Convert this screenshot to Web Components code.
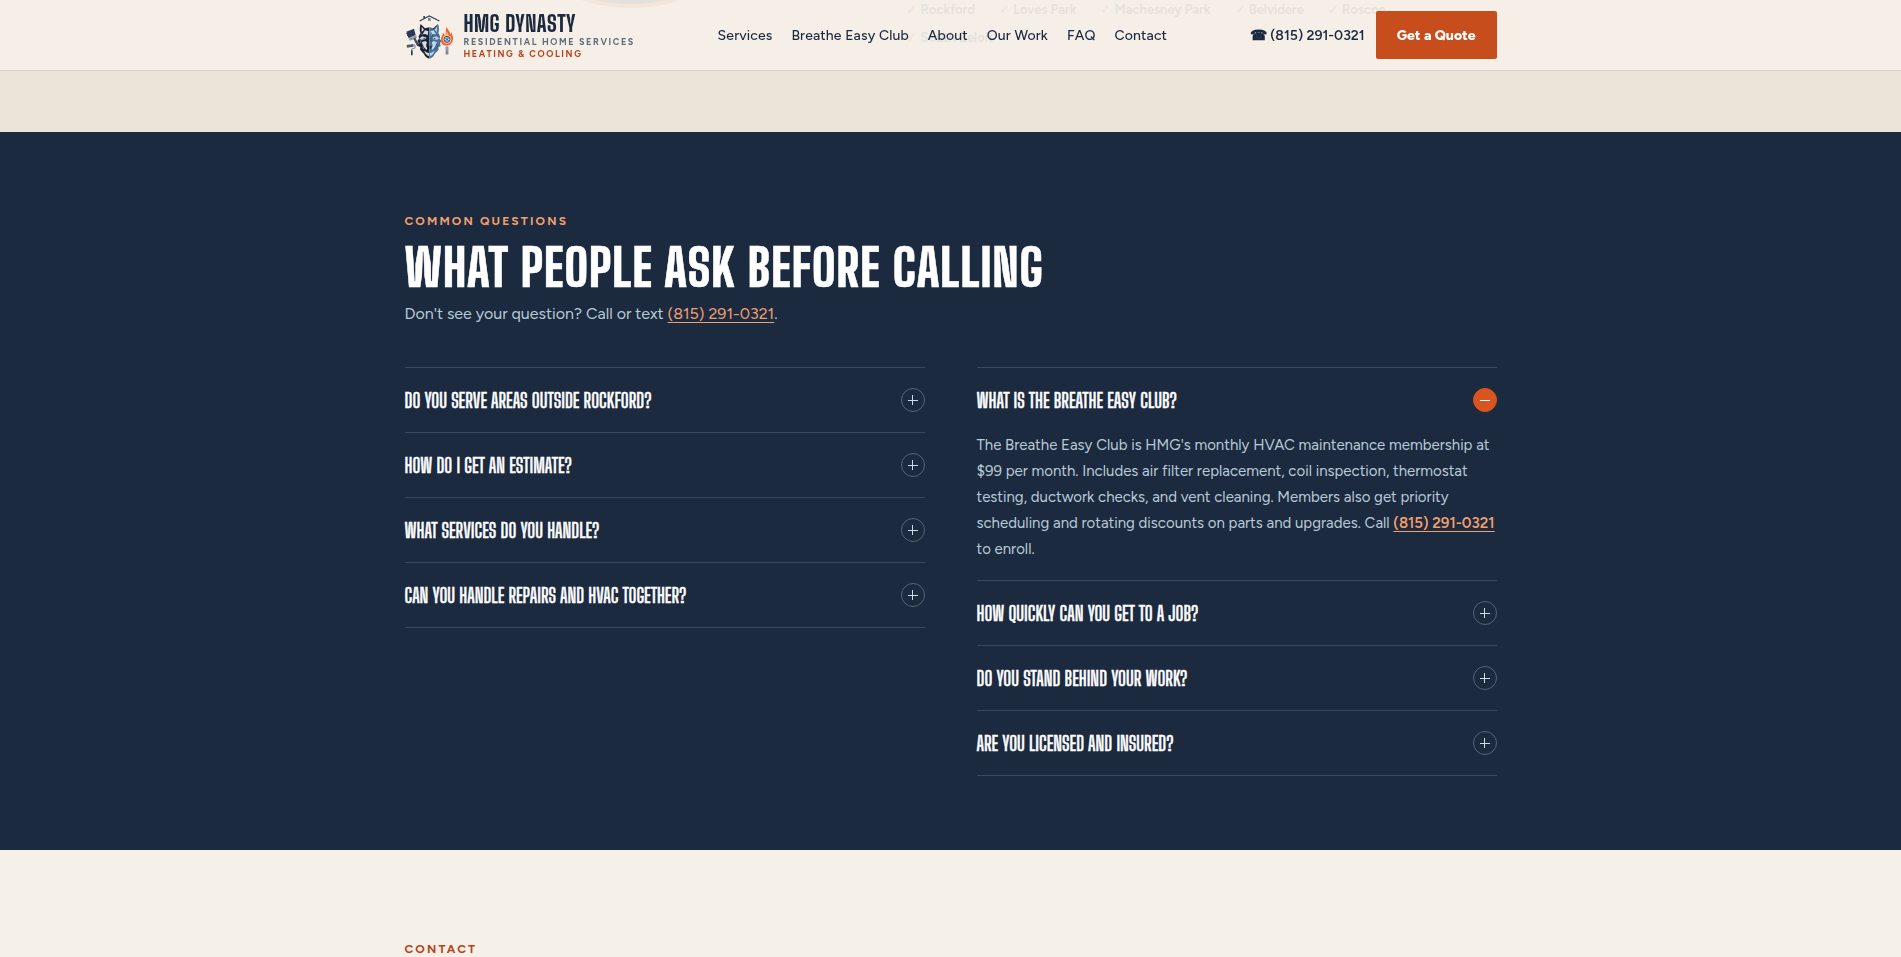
<!DOCTYPE html>
<html lang="en">
<head>
<meta charset="utf-8">
<meta name="viewport" content="width=device-width, initial-scale=1">
<title>HMG Dynasty | Residential Home Services</title>
<style>
  :root {
    --cream: #f5f0e8;
    --sand: #ebe4d8;
    --navy: #1c2a40;
    --slate: #5f6b7a;
    --rust: #c84d1c;
    --rust-text: #b8431a;
    --flame: #d9541e;
    --peach: #f0a070;
    --mist: #b8cad6;
    --display: "Big Shoulders Display", "Open Sans Condensed", "Roboto Condensed", sans-serif;
    --body: Figtree, Lato, "Liberation Sans", sans-serif;
  }
  body {
    margin: 0;
    background: var(--cream);
    color: var(--navy);
    font-family: var(--body);
    font-size: 16px;
    -webkit-font-smoothing: antialiased;
  }
</style>
</head>
<body>

<site-header></site-header>

<main>
  <service-areas>
    <area-tag>Rockford</area-tag>
    <area-tag>Loves Park</area-tag>
    <area-tag>Machesney Park</area-tag>
    <area-tag>Belvidere</area-tag>
    <area-tag>Roscoe</area-tag>
    <area-tag>South Beloit</area-tag>
  </service-areas>

  <faq-section id="faq">
    <section-eyebrow slot="eyebrow">Common Questions</section-eyebrow>
    <span slot="title">What People Ask Before Calling</span>
    <span slot="lead">Don't see your question? Call or text <phone-link></phone-link>.</span>

    <faq-item slot="left" question="Do you serve areas outside Rockford?"></faq-item>
    <faq-item slot="left" question="How do I get an estimate?"></faq-item>
    <faq-item slot="left" question="What services do you handle?"></faq-item>
    <faq-item slot="left" question="Can you handle repairs and HVAC together?"></faq-item>

    <faq-item slot="right" question="What is the Breathe Easy Club?" open>
      The Breathe Easy Club is HMG's monthly HVAC maintenance membership at $99 per month. Includes air filter replacement, coil inspection, thermostat testing, ductwork checks, and vent cleaning. Members also get priority scheduling and rotating discounts on parts and upgrades. Call <phone-link strong></phone-link> to enroll.
    </faq-item>
    <faq-item slot="right" question="How quickly can you get to a job?"></faq-item>
    <faq-item slot="right" question="Do you stand behind your work?"></faq-item>
    <faq-item slot="right" question="Are you licensed and insured?"></faq-item>
  </faq-section>

  <contact-section id="contact">
    <section-eyebrow tone="rust">Contact</section-eyebrow>
  </contact-section>
</main>

<script>
// shared helper: attach an open root and fill it
class BaseElement extends HTMLElement {
  constructor() {
    super()
    this.attachShadow({ mode: 'open' })
  }

  connectedCallback() {
    this.shadowRoot.innerHTML = this.template()
  }

  template() {
    return '<slot></slot>'
  }
}

class BrandMark extends BaseElement {
  template() {
    return `
      <style>
        :host { display: block; width: 48px; height: 48px; }
        svg { display: block; width: 100%; height: 100%; }
      </style>
      <svg viewBox="13 18 144 144" aria-hidden="true">
        <!-- roof -->
        <path d="M57 48 86 33l30 15" fill="none" stroke="#34425e" stroke-width="4"/>
        <path d="M68 33h5v5l-5 3z" fill="#34425e"/>
        <path d="M82 39h8v9h-8zM84 41v2h1v-2zM87 41v2h1v-2zM84 45v2h1v-2zM87 45v2h1v-2z" fill="#6f7b8e" fill-rule="evenodd"/>
        <!-- brush -->
        <path d="M17 80l23-9 5 19-21 10-3-7-3-1 2-3-4-4 3-2z" fill="#2b3a58"/>
        <path d="M24 101l22-10 3 7-21 9z" fill="#8a93a2"/>
        <path d="M38 101l6-3 10 19c3 6-3 9-6 4z" fill="#3c4a66"/>
        <!-- roller -->
        <path d="M18 120l20-3 1 8-20 3z" fill="#4c5870"/>
        <path d="M39 120h4v9l-10 3v5" fill="none" stroke="#4c5870" stroke-width="2"/>
        <path d="M31 136h5v15h-5z" fill="#2f3d59"/>
        <!-- wolf, dark half -->
        <path d="M60 57l13 13 13-3v94c-8-1-13-7-16-14l-12-13 1-7-7-4 2-8-4-7 5-7-1-8 5-8c-3-10-2-20 1-28z" fill="#1b2233"/>
        <path d="M63 65l7 9-7 7zM73 76l10 3-2 12-7-4-8 1zM57 100l8-6 13 4-5 5-11 1zM63 112l10-4 6 4-3 9 5 6-4 8-7-8zM70 137l10 6 5 1v9c-6-1-10-6-15-16z" fill="#d7dce3"/>
        <path d="M65 98l9 2-3 2zM76 122l9 2v9l-5-3z" fill="#0e1420"/>
        <!-- wolf, frost half -->
        <path d="M112 57l-13 13-13-3v94c8-1 13-7 16-14l12-13-1-7 7-4-2-8 4-7-5-7 1-8-5-8c3-10 2-20-1-28z" fill="#4a7199"/>
        <path d="M109 65l-7 9 7 7zM99 76l-10 3 2 12 7-4 8 1zM115 100l-8-6-13 4 5 5 11 1zM109 112l-10-4-6 4 3 9-5 6 4 8 7-8zM102 137l-10 6-4 1v9c6-1 10-6 14-16z" fill="#bcd7ea"/>
        <path d="M107 98l-9 2 3 2zM96 122l-9 2v9l5-3zM112 57l-12 15-6 2 8-8z" fill="#1d3049"/>
        <path d="M91 82l6 13-7 5 3 13M114 88l-6 4M106 118l5 6-8 10" fill="none" stroke="#28476b" stroke-width="2"/>
        <path d="M59 84l6 5M54 99l7 8-3 8M66 124l3 8" fill="none" stroke="#9ba4b2" stroke-width="2"/>
        <!-- flame with snowflake -->
        <path d="M138 122c-12 0-19-9-17-20 0-8 6-10 5-18 4 2 6 4 6 8 6-8 2-17 6-26 3 9 12 13 10 23l4-8c1 8 6 11 5 21-1 12-9 20-19 20z" fill="#f8612a"/>
        <path d="M130 92c5-2 6-7 8-13 3 5 6 8 5 13z" fill="#ffab6a"/>
        <circle cx="139" cy="103" r="13" fill="#f6cdb0"/>
        <circle cx="139" cy="103" r="9" fill="#e9eef3" stroke="#2f466b" stroke-width="3"/>
        <path d="M139 96v14M133 99l12 8M145 99l-12 8" stroke="#2f466b" stroke-width="2"/>
        <!-- thermometer -->
        <path d="M136 126h6v14h-6z" fill="#dfe3e8" stroke="#5b6780" stroke-width="2"/>
        <path d="M139 128v13" stroke="#5b6780" stroke-width="2"/>
        <circle cx="139" cy="144" r="5" fill="#7f8a9c"/>
      </svg>
    `
  }
}

class SiteBrand extends BaseElement {
  template() {
    return `
      <style>
        :host { display: block; }
        a { display: flex; align-items: center; gap: 11px; color: inherit; text-decoration: none; }
        .text { display: flex; flex-direction: column; padding-top: 2px; text-transform: uppercase; font-weight: 700; }
        .name { font: 800 22px/24px var(--display); letter-spacing: 0.02em; }
        .sub { font-size: 9px; line-height: 12px; letter-spacing: 0.18em; color: var(--slate); }
        .trade { color: var(--rust-text); }
      </style>
      <a href="#top">
        <brand-mark></brand-mark>
        <span class="text">
          <span class="name">HMG Dynasty</span>
          <span class="sub">Residential Home Services</span>
          <span class="sub trade">Heating &amp; Cooling</span>
        </span>
      </a>
    `
  }
}

class SiteNav extends BaseElement {
  template() {
    const links = [
      ['Services', '#services'],
      ['Breathe Easy Club', '#club'],
      ['About', '#about'],
      ['Our Work', '#work'],
      ['FAQ', '#faq'],
      ['Contact', '#contact']
    ]
    return `
      <style>
        :host { display: block; }
        nav { display: flex; gap: 19px; padding-top: 2px; }
        a { font-size: 14px; line-height: 22px; font-weight: 500; letter-spacing: 0.01em; color: inherit; text-decoration: none; white-space: nowrap; }
      </style>
      <nav aria-label="Main">
        ${links.map(([label, href]) => `<a href="${href}">${label}</a>`).join('')}
      </nav>
    `
  }
}

class SiteHeader extends BaseElement {
  template() {
    return `
      <style>
        :host {
          display: block;
          position: fixed;
          inset: 0 0 auto 0;
          z-index: 10;
          background: rgb(245 240 232 / 92%);
          border-bottom: 1px solid rgb(28 42 64 / 14%);
        }
        .bar {
          display: flex;
          align-items: center;
          justify-content: space-between;
          max-width: 1092px;
          height: 70px;
          margin: 0 auto;
          padding: 0 24px;
        }
        .actions { display: flex; align-items: center; gap: 11px; }
        .phone { padding-top: 2px; font-size: 14px; line-height: 22px; font-weight: 600; color: inherit; text-decoration: none; white-space: nowrap; }
        button {
          height: 48px;
          padding: 2px 21px 0;
          border: 0;
          border-radius: 2px;
          background: var(--rust);
          color: #fff;
          font: 800 14px/20px var(--body);
          white-space: nowrap;
          cursor: pointer;
        }
      </style>
      <header class="bar">
        <site-brand></site-brand>
        <site-nav></site-nav>
        <div class="actions">
          <a class="phone" href="tel:+18152910321">☎ (815) 291-0321</a>
          <button type="button">Get a Quote</button>
        </div>
      </header>
    `
  }
}

class AreaTag extends BaseElement {
  template() {
    return `
      <style>
        :host { display: block; font-size: 13px; line-height: 20px; font-weight: 600; white-space: nowrap; }
        .tick { color: var(--flame); font-weight: 700; }
      </style>
      <span class="tick">✓</span> <slot></slot>
    `
  }
}

class ServiceAreas extends BaseElement {
  template() {
    // only the tail of this section is in view below the sticky header
    return `
      <style>
        :host { display: block; height: 132px; overflow: hidden; background: var(--sand); }
        .wrap {
          display: grid;
          grid-template-columns: 1fr 1.3fr;
          gap: 48px;
          align-items: end;
          align-content: end;
          height: 100%;
          box-sizing: border-box;
          max-width: 1140px;
          margin: 0 auto;
          padding: 0 24px 84px;
        }
        .map {
          justify-self: center;
          box-sizing: border-box;
          width: 320px;
          height: 320px;
          margin-bottom: 40px;
          border: 4px solid #e06432;
          border-radius: 50%;
          background: var(--navy);
        }
        .areas { display: flex; flex-wrap: wrap; gap: 8px 24px; padding-right: 48px; }
      </style>
      <section class="wrap">
        <div class="map"></div>
        <div class="areas"><slot></slot></div>
      </section>
    `
  }
}

class SectionEyebrow extends BaseElement {
  template() {
    return `
      <style>
        :host {
          display: block;
          font-size: 12px;
          line-height: 20px;
          font-weight: 700;
          letter-spacing: 0.18em;
          text-transform: uppercase;
          color: var(--peach);
        }
        :host([tone="rust"]) { color: var(--rust-text); }
      </style>
      <slot></slot>
    `
  }
}

class PhoneLink extends BaseElement {
  template() {
    return `
      <style>
        a { color: var(--peach); text-underline-offset: 3px; }
        :host([strong]) a { font-weight: 600; }
      </style><a href="tel:+18152910321">(815) 291-0321</a>`
  }
}

class FaqItem extends BaseElement {
  connectedCallback() {
    super.connectedCallback()
    this.shadowRoot.querySelector('button').addEventListener('click', () => {
      const open = this.toggleAttribute('open')
      this.shadowRoot.querySelector('button').setAttribute('aria-expanded', open)
    })
  }

  template() {
    return `
      <style>
        :host { display: block; border-bottom: 1px solid #3a475b; }
        h3 { margin: 0; }
        button {
          display: flex;
          align-items: center;
          justify-content: space-between;
          gap: 16px;
          width: 100%;
          height: 64px;
          padding: 0;
          border: 0;
          background: none;
          color: #fff;
          font: 600 20px/24px var(--display);
          -webkit-text-stroke: 0.02em currentColor;
          text-align: left;
          text-transform: uppercase;
          cursor: pointer;
        }
        .icon {
          flex: none;
          display: grid;
          place-items: center;
          box-sizing: border-box;
          width: 24px;
          height: 24px;
          border: 1px solid #56647a;
          border-radius: 50%;
          color: #cfdce6;
        }
        svg { display: block; width: 10px; height: 10px; }
        .answer { display: none; padding: 0 0 18px; color: var(--mist); font-size: 15px; line-height: 26px; }
        :host([open]) .answer { display: block; }
        :host([open]) .icon { background: var(--flame); border-color: var(--flame); color: #fff; }
        :host([open]) .upright { display: none; }
      </style>
      <h3>
        <button type="button" aria-expanded="${this.hasAttribute('open')}" aria-controls="answer">
          <span>${this.getAttribute('question')}</span>
          <span class="icon">
            <svg viewBox="0 0 10 10" stroke="currentColor" stroke-width="1" fill="none">
              <path d="M0 5.5h10"/>
              <path class="upright" d="M4.5 0v10"/>
            </svg>
          </span>
        </button>
      </h3>
      <div class="answer" id="answer"><slot></slot></div>
    `
  }
}

class FaqSection extends BaseElement {
  template() {
    return `
      <style>
        :host { display: block; background: var(--navy); color: #fff; }
        .wrap { max-width: 1092px; margin: 0 auto; padding: 79px 24px 74px; }
        h2 {
          margin: 12px 0 8px;
          font: 800 51px/50px var(--display);
          letter-spacing: 0.02em;
          -webkit-text-stroke: 0.01em currentColor;
          text-transform: uppercase;
        }
        p { margin: 0 0 40px; font-size: 16px; line-height: 26px; color: var(--mist); }
        .columns { display: grid; grid-template-columns: 1fr 1fr; gap: 52px; align-items: start; }
        .column { border-top: 1px solid #3a475b; }
      </style>
      <section class="wrap">
        <slot name="eyebrow"></slot>
        <h2><slot name="title"></slot></h2>
        <p><slot name="lead"></slot></p>
        <div class="columns">
          <div class="column"><slot name="left"></slot></div>
          <div class="column"><slot name="right"></slot></div>
        </div>
      </section>
    `
  }
}

class ContactSection extends BaseElement {
  template() {
    return `
      <style>
        :host { display: block; height: 107px; overflow: hidden; background: var(--cream); }
        .wrap { max-width: 1092px; margin: 0 auto; padding: 89px 24px 0; }
      </style>
      <section class="wrap"><slot></slot></section>
    `
  }
}

customElements.define('brand-mark', BrandMark)
customElements.define('site-brand', SiteBrand)
customElements.define('site-nav', SiteNav)
customElements.define('site-header', SiteHeader)
customElements.define('area-tag', AreaTag)
customElements.define('service-areas', ServiceAreas)
customElements.define('section-eyebrow', SectionEyebrow)
customElements.define('phone-link', PhoneLink)
customElements.define('faq-item', FaqItem)
customElements.define('faq-section', FaqSection)
customElements.define('contact-section', ContactSection)
</script>
</body>
</html>
